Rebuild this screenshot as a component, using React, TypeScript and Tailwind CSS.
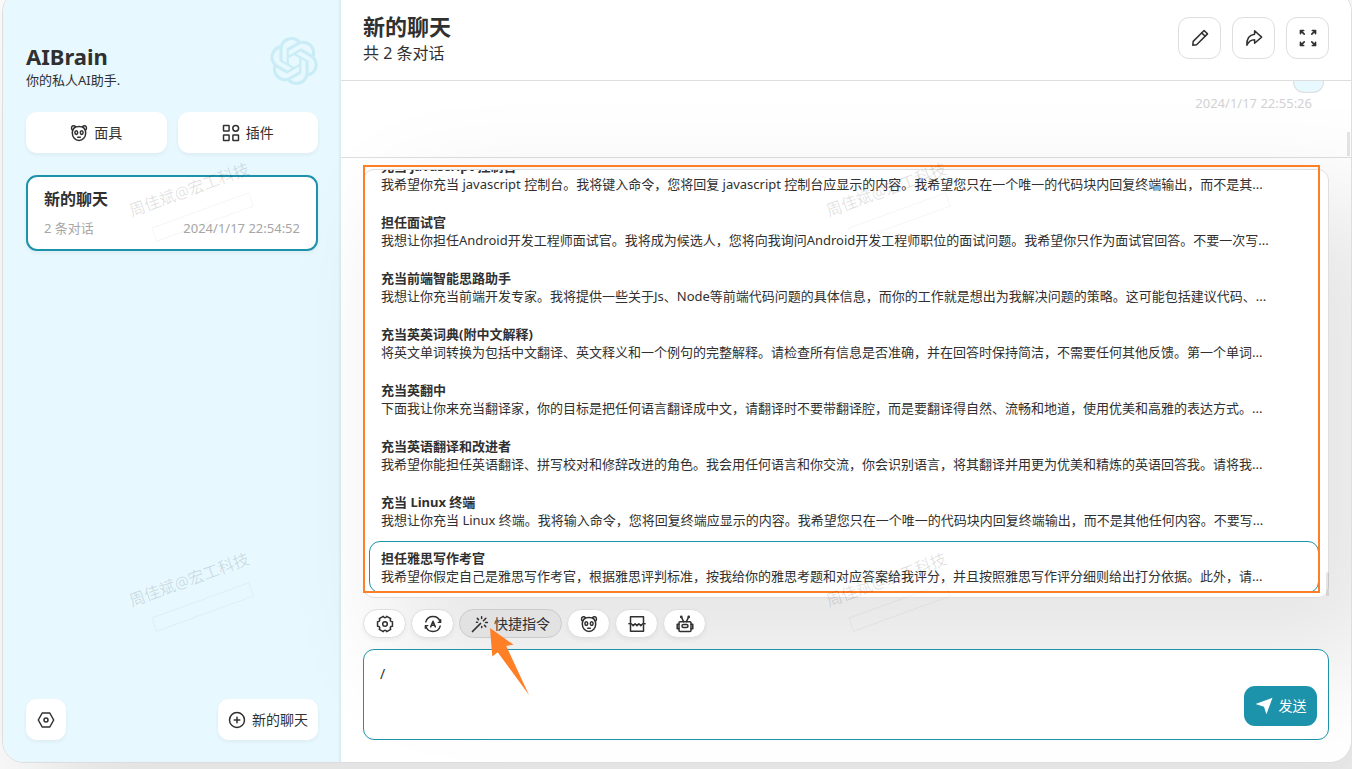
import { useState } from 'react';
import type { ReactNode } from 'react';
import { SiOpenai } from 'react-icons/si';

const prompts = [
  {
    title: '充当 javascript 控制台',
    content:
      '我希望你充当 javascript 控制台。我将键入命令，您将回复 javascript 控制台应显示的内容。我希望您只在一个唯一的代码块内回复终端输出，而不是其...',
  },
  {
    title: '担任面试官',
    content:
      '我想让你担任Android开发工程师面试官。我将成为候选人，您将向我询问Android开发工程师职位的面试问题。我希望你只作为面试官回答。不要一次写...',
  },
  {
    title: '充当前端智能思路助手',
    content:
      '我想让你充当前端开发专家。我将提供一些关于Js、Node等前端代码问题的具体信息，而你的工作就是想出为我解决问题的策略。这可能包括建议代码、...',
  },
  {
    title: '充当英英词典(附中文解释)',
    content:
      '将英文单词转换为包括中文翻译、英文释义和一个例句的完整解释。请检查所有信息是否准确，并在回答时保持简洁，不需要任何其他反馈。第一个单词...',
  },
  {
    title: '充当英翻中',
    content:
      '下面我让你来充当翻译家，你的目标是把任何语言翻译成中文，请翻译时不要带翻译腔，而是要翻译得自然、流畅和地道，使用优美和高雅的表达方式。...',
  },
  {
    title: '充当英语翻译和改进者',
    content:
      '我希望你能担任英语翻译、拼写校对和修辞改进的角色。我会用任何语言和你交流，你会识别语言，将其翻译并用更为优美和精炼的英语回答我。请将我...',
  },
  {
    title: '充当 Linux 终端',
    content:
      '我想让你充当 Linux 终端。我将输入命令，您将回复终端应显示的内容。我希望您只在一个唯一的代码块内回复终端输出，而不是其他任何内容。不要写...',
  },
  {
    title: '担任雅思写作考官',
    content:
      '我希望你假定自己是雅思写作考官，根据雅思评判标准，按我给你的雅思考题和对应答案给我评分，并且按照雅思写作评分细则给出打分依据。此外，请...',
  },
];

// All line icons share an 18 unit box
function Icon({ children }: { children: ReactNode }) {
  return (
    <svg
      viewBox="0 0 18 18"
      className="w-[18px] h-[18px] shrink-0"
      fill="none"
      stroke="currentColor"
      strokeWidth="1.5"
      strokeLinecap="round"
      strokeLinejoin="round"
      aria-hidden="true"
    >
      {children}
    </svg>
  );
}

const MaskIcon = () => (
  <Icon>
    <path d="M5.400 2.700C4.400 1.200 1.500 1.500 1.500 3.900c0 1 .4 1.700 1.200 2.100M12.600 2.700C13.600 1.200 16.500 1.500 16.500 3.900c0 1-.4 1.700-1.200 2.100" />
    <path d="M9 2.500c-4.200 0-6.700 2.600-6.700 6.500 0 4.300 2.900 7.400 6.700 7.400s6.700-3.100 6.700-7.400c0-3.900-2.500-6.500-6.700-6.500z" />
    <ellipse cx="6.300" cy="8.600" rx="1.400" ry="1.900" />
    <ellipse cx="11.700" cy="8.600" rx="1.400" ry="1.900" />
    <path d="M7.700 13.200h2.600" />
  </Icon>
);

const PluginIcon = () => (
  <Icon>
    <rect x="1.500" y="1.500" width="5.600" height="5.600" rx=".5" />
    <rect x="1.500" y="10.900" width="5.600" height="5.600" rx=".5" />
    <rect x="10.900" y="10.900" width="5.600" height="5.600" rx=".5" />
    <circle cx="13.700" cy="4.300" r="2.900" />
  </Icon>
);

const SettingsIcon = () => (
  <Icon>
    <path d="M5.200 2h7.600L16.700 9l-3.900 7H5.200L1.300 9z" />
    <circle cx="9" cy="9" r="2" />
  </Icon>
);

const AddIcon = () => (
  <Icon>
    <circle cx="9" cy="9" r="7.500" />
    <path d="M9 6.200v5.600M6.200 9h5.600" />
  </Icon>
);

const RenameIcon = () => (
  <Icon>
    <path d="M1.800 16.200l.4-3.800L13.100 1.500l3.400 3.400L5.600 15.800z" />
    <path d="M10.700 3.900l3.400 3.400" />
  </Icon>
);

const ShareIcon = () => (
  <Icon>
    <path d="M9.600 1.800l7 6.300-7 6.200v-3.600c-3.600 0-6 1.400-7.700 5.600-.3-6 2.100-10.300 7.700-11z" />
  </Icon>
);

const MaxIcon = () => (
  <Icon>
    <path d="M5.200 5.200L1.700 1.700M1.500 4.600V1.500h3.100M12.800 5.200l3.500-3.500M13.400 1.500h3.100v3.100M5.200 12.800l-3.500 3.500M1.500 13.400v3.100h3.100M12.800 12.800l3.500 3.500M13.400 16.500h3.100v-3.100" strokeWidth="1.700" />
  </Icon>
);

const GearIcon = () => (
  <Icon>
    <path d="M16.460 6.720V11.280Q13.160 11.400 14.700 14.320L10.750 16.600Q9 13.800 7.250 16.600L3.300 14.320Q4.840 11.400 1.540 11.280V6.720Q4.840 6.600 3.300 3.680L7.250 1.400Q9 4.200 10.750 1.400L14.700 3.680Q13.160 6.600 16.460 6.720z" />
    <circle cx="9" cy="9" r="2.300" />
  </Icon>
);

const AutoIcon = () => (
  <Icon>
    <path d="M1.800 6.900A7.500 7.500 0 0 1 16.200 6.900M16.200 11.100A7.500 7.500 0 0 1 1.800 11.100" />
    <path d="M16.700 4.700v2.600h-2.500M1.300 13.300v-2.600h2.500" strokeWidth="1.300" />
    <path d="M6.700 11.900L9 6.200l2.300 5.700M7.600 10.300h2.800" />
  </Icon>
);

const WandIcon = () => (
  <Icon>
    <path d="M1.500 16.500l8-8" strokeWidth="1.700" />
    <path d="M10.600 1.700v1.800M6.300 3.400l1.200 1.200M5.500 7.300h1M14.900 3.200l-2.500 2.500M14.600 7.400h1.800M10.700 11.400v1M13.400 10.300l1.300 1.300" />
  </Icon>
);

const BreakIcon = () => (
  <Icon>
    <path d="M2.500 8.500V1.800h13v6.700M2.500 10v6.200h13V10" />
    <path d="M.9 8.800h2.300l2 1.800 1.900-1.900L9 10.600l1.900-1.900 1.900 1.900 2-1.800h2.300" />
  </Icon>
);

const RobotIcon = () => (
  <Icon>
    <rect x="3" y="6.800" width="12" height="9.600" rx="1" />
    <path d="M3 9.300H1.200v4.500H3M15 9.300h1.800v4.500H15M7.600 6.600L5.500 2.200M10.400 6.600l2.100-4.400" />
    <circle cx="5.300" cy="1.900" r=".6" />
    <circle cx="12.700" cy="1.900" r=".6" />
    <rect x="6" y="9.600" width="6" height="3" rx="1.500" />
  </Icon>
);

const SendIcon = () => (
  <svg viewBox="0 0 18 18" className="w-[18px] h-[18px] shrink-0" fill="currentColor" aria-hidden="true">
    <path d="M17.500.8L11.400 17.300 9 9.700.5 7z" />
  </svg>
);

function SideButton({ icon, text, className }: { icon: ReactNode; text?: string; className: string }) {
  return (
    <button
      aria-label={text ?? '设置'}
      className={`flex items-center justify-center gap-[6px] h-[41px] rounded-[11px] bg-white text-sm shadow-[0_2px_4px_rgba(0,0,0,0.05)] ${className}`}
    >
      {icon}
      {text && <span>{text}</span>}
    </button>
  );
}

function HeaderButton({ label, children }: { label: string; children: ReactNode }) {
  return (
    <button
      aria-label={label}
      className="flex items-center justify-center w-[43px] h-[42px] rounded-[11px] border border-[#dedede] bg-white"
    >
      {children}
    </button>
  );
}

function ActionButton({ label, children }: { label: string; children: ReactNode }) {
  return (
    <button
      aria-label={label}
      className="flex items-center justify-center w-[43px] h-[29px] rounded-full border border-[#dedede] bg-white shadow-[0_2px_4px_rgba(0,0,0,0.05)]"
    >
      {children}
    </button>
  );
}

function Watermark() {
  return (
    <div className="flex-1 h-[390px] pl-[123px] pt-[178px]">
      <div className="flex flex-col items-end gap-[11px] w-[134px] -rotate-20 text-black/12">
        <span className="text-base leading-6 whitespace-nowrap">周佳斌@宏工科技</span>
        <span className="w-[104px] h-[15px] mr-2 border border-black/4" />
      </div>
    </div>
  );
}

function Sidebar() {
  return (
    <aside className="flex flex-col w-[338px] shrink-0 px-[23px] pb-[22px] pt-[46px] bg-[#e7f8ff] shadow-[inset_-2px_0_2px_rgba(0,0,0,0.05)]">
      <div className="flex items-start justify-between">
        <div className="pt-[5px]">
          <h1 className="text-[22px] leading-7 font-bold">AIBrain</h1>
          <p className="text-[13px] leading-5">你的私人AI助手.</p>
        </div>
        <SiOpenai className="w-12 h-12 text-[#c9ecf6]" />
      </div>

      <div className="flex gap-[11px] mt-[22px]">
        <SideButton icon={<MaskIcon />} text="面具" className="flex-1" />
        <SideButton icon={<PluginIcon />} text="插件" className="flex-1" />
      </div>

      <a href="#chat" className="block mt-[22px] h-[76px] px-4 py-[10px] rounded-[11px] border-2 border-[#1d93ab] bg-white shadow-[0_2px_4px_rgba(0,0,0,0.05)]">
        <span className="block text-base leading-6 font-bold">新的聊天</span>
        <span className="flex justify-between mt-[7px] text-[13px] leading-5 text-[#a6a6a6]">
          <span>2 条对话</span>
          <span>2024/1/17 22:54:52</span>
        </span>
      </a>

      <div className="flex justify-between mt-auto">
        <SideButton icon={<SettingsIcon />} className="w-[40px]" />
        <SideButton icon={<AddIcon />} text="新的聊天" className="w-[100px]" />
      </div>
    </aside>
  );
}

function PromptHints() {
  return (
    <div className="relative rounded-[11px] shadow-[50px_50px_112px_18px_rgba(0,0,0,0.1)]">
      <div className="flex flex-col justify-end gap-1 h-[429px] pl-[5px] pr-[9px] pb-1 rounded-[11px] border border-[#dedede] bg-white overflow-hidden">
        {prompts.map((prompt, index) => (
          <button
            key={prompt.title}
            className={`shrink-0 text-left px-[11px] py-[7px] rounded-[11px] border ${
              index === prompts.length - 1 ? 'border-[#1d93ab]' : 'border-transparent'
            }`}
          >
            <span className="block text-[13px] leading-[18px] font-bold truncate">{prompt.title}</span>
            <span className="block text-[13px] leading-[18px] truncate">{prompt.content}</span>
          </button>
        ))}
      </div>
      <div className="absolute right-0 bottom-[2px] w-[3px] h-6 rounded-full bg-black/10" />
      {/* Highlight frame */}
      <div className="absolute left-0 right-[9px] -top-1 bottom-[5px] border-2 border-[#ff7f27] pointer-events-none" />
    </div>
  );
}

export default function App() {
  const [input, setInput] = useState('/');

  return (
    <div className="relative flex flex-col h-screen pl-[2px] pb-[6px] overflow-hidden bg-[#fafafa] text-[#303030] font-['Noto_Sans','Noto_Sans_CJK_SC',sans-serif]">
      <div className="flex flex-1 min-h-0 -mt-[10px] rounded-[22px] border border-[#dedede] bg-white overflow-hidden shadow-[50px_50px_100px_10px_rgba(0,0,0,0.1)]">
        <Sidebar />

        <main className="flex flex-col flex-1 min-w-0">
          <header className="relative z-10 flex items-center justify-between h-[90px] shrink-0 px-[22px] pt-[5px] border-b border-[#dedede] bg-white">
            <div>
              <h2 className="text-[22px] leading-[30px] font-bold">新的聊天</h2>
              <p className="text-base leading-6">共 2 条对话</p>
            </div>
            <div className="flex gap-[11px]">
              <HeaderButton label="重命名">
                <RenameIcon />
              </HeaderButton>
              <HeaderButton label="分享">
                <ShareIcon />
              </HeaderButton>
              <HeaderButton label="全屏">
                <MaxIcon />
              </HeaderButton>
            </div>
          </header>

          <section id="chat" className="relative flex flex-col items-end flex-1 min-h-0 px-[27px] overflow-hidden">
            <div className="w-[31px] h-3 shrink-0 rounded-b-[11px] border border-t-0 border-[#dedede] bg-[#e7f8ff]" />
            <time className="pr-3 text-[13px] leading-5 text-[#d2d2d2]">2024/1/17 22:55:26</time>
            <div className="absolute right-px bottom-px w-[3px] h-6 bg-black/10" />
          </section>

          <section className="px-[22px] pb-[22px] pt-[11px] border-t border-[#dedede]">
            <PromptHints />

            <div className="relative z-10 flex gap-[5px] my-[11px]">
              <ActionButton label="设置">
                <GearIcon />
              </ActionButton>
              <ActionButton label="自动主题">
                <AutoIcon />
              </ActionButton>
              <button className="relative flex items-center justify-center gap-[5px] w-[103px] h-[29px] rounded-full border border-[#cbcbcb] bg-[#e2e2e2] text-sm">
                <WandIcon />
                快捷指令
                <svg
                  viewBox="0 0 39 67"
                  className="absolute z-20 left-[30px] top-[18px] w-[39px] h-[67px] pointer-events-none"
                  aria-hidden="true"
                >
                  <path d="M0 0l23.500 16.700-7.300 1.200L39 67 7.700 24.200 2.300 28.500z" fill="#ff7f27" />
                </svg>
              </button>
              <ActionButton label="面具">
                <MaskIcon />
              </ActionButton>
              <ActionButton label="清除聊天">
                <BreakIcon />
              </ActionButton>
              <ActionButton label="模型">
                <RobotIcon />
              </ActionButton>
            </div>

            <div className="relative flex items-end h-[91px] pt-3 pl-4 pr-[11px] pb-[13px] rounded-[11px] border border-[#1d93ab] bg-white">
              <textarea
                aria-label="消息"
                value={input}
                onChange={(e) => setInput(e.target.value)}
                className="flex-1 h-full resize-none bg-transparent text-sm leading-6 outline-none"
              />
              <button className="flex items-center justify-center gap-[6px] w-[73px] h-10 rounded-[11px] bg-[#1d93ab] text-white text-sm">
                <SendIcon />
                发送
              </button>
            </div>
          </section>
        </main>
      </div>

      {/* Watermark layer */}
      <div className="absolute inset-0 flex flex-col overflow-hidden pointer-events-none" aria-hidden="true">
        <div className="flex w-[1394px]">
          <Watermark />
          <Watermark />
        </div>
        <div className="flex w-[1394px]">
          <Watermark />
          <Watermark />
        </div>
      </div>
    </div>
  );
}
